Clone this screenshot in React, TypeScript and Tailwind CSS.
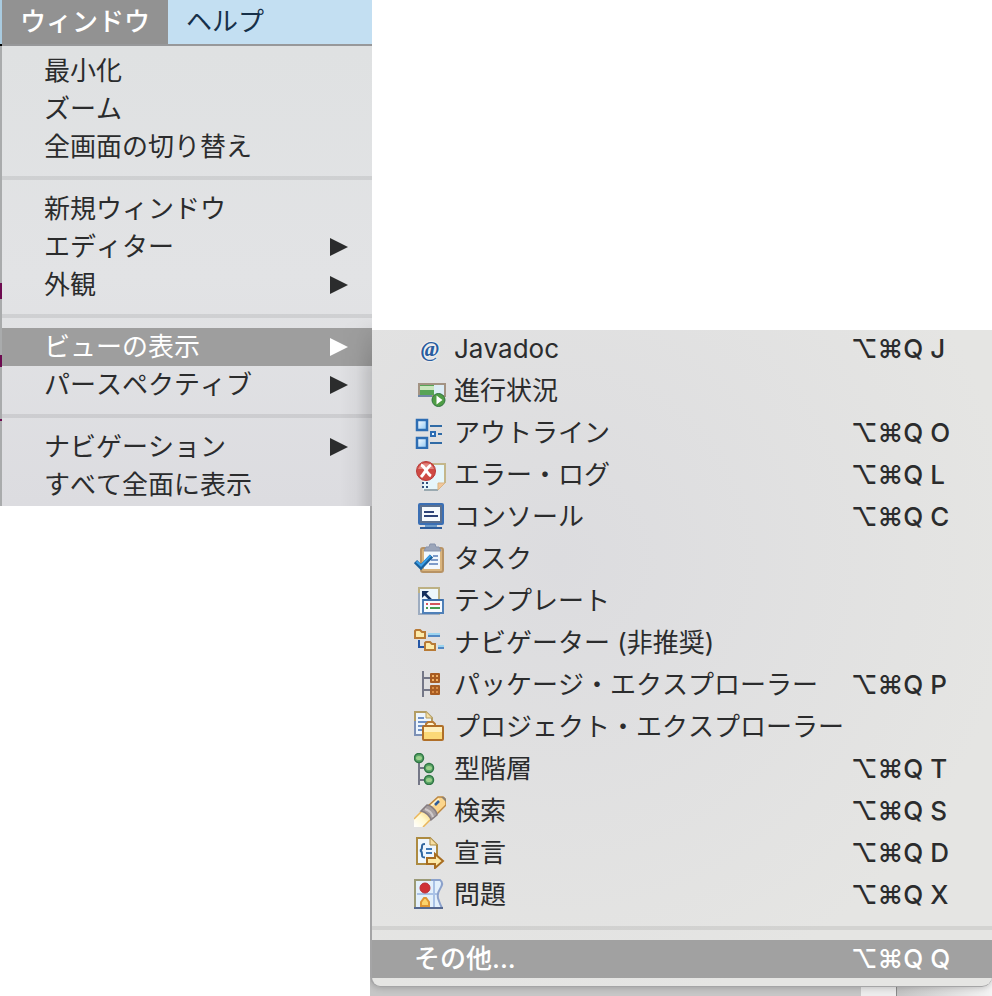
import type { ReactNode } from "react";

const FONT = "font-['Inter','Noto_Sans_CJK_JP',sans-serif]";

function Icon({ children }: { children: ReactNode }) {
  return (
    <svg width="32" height="32" viewBox="0 0 32 32" fill="none" aria-hidden="true">
      {children}
    </svg>
  );
}

const JavadocIcon = () => (
  <span
    aria-hidden="true"
    className="flex h-8 w-8 items-center justify-center font-['Liberation_Serif',serif] text-[22px] leading-none font-bold text-[#2a5d9e] italic [text-shadow:0_0_2px_white,0_0_2px_white]"
  >
    @
  </span>
);

const ProgressIcon = () => (
  <Icon>
    <rect x="5" y="9" width="26" height="12" fill="#dcecf5" stroke="#a39383" strokeWidth="2" />
    <path d="M4 21h14" stroke="#6f87a5" strokeWidth="2" />
    <rect x="6" y="10" width="14" height="10" fill="#57a457" />
    <rect x="6" y="11" width="14" height="4" fill="#c9e6bd" />
    <circle cx="24.5" cy="25" r="6.5" fill="#4f9d45" stroke="#2f7440" />
    <path d="M22.5 20.5l6 4.5-6 4.5z" fill="#fff" />
  </Icon>
);

const OutlineIcon = () => (
  <Icon>
    <defs>
      <linearGradient id="outline-box" x1="0" y1="0" x2="1" y2="1">
        <stop stopColor="#fff" />
        <stop offset="1" stopColor="#8cc6f3" />
      </linearGradient>
    </defs>
    <rect x="3" y="3" width="10" height="10" fill="url(#outline-box)" stroke="#2d6db3" strokeWidth="2.500" />
    <rect x="3" y="21" width="10" height="10" fill="url(#outline-box)" stroke="#2d6db3" strokeWidth="2.500" />
    <path d="M16 9h12M16 26h12M24 17h4" stroke="#2f6aa5" strokeWidth="2" />
    <rect x="17" y="15" width="4" height="4" fill="#e9f5ff" stroke="#2d6db3" strokeWidth="2" />
  </Icon>
);

const ErrorLogIcon = () => (
  <Icon>
    <path d="M9 5h22v19l-7 7H9z" fill="#e6f6fb" />
    <path d="M18 5h13v19" stroke="#c4b78b" strokeWidth="2" />
    <path d="M10 31h14" stroke="#9aa9b0" strokeWidth="2" />
    <path d="M24 31v-7h7z" fill="#f2c69a" stroke="#d9b583" />
    <path d="M8 24h2M8 28h2M12 24h2M12 28h2" stroke="#34517d" strokeWidth="2" />
    <circle cx="12" cy="12" r="9.5" fill="#cf4b45" stroke="#b83a38" />
    <path d="M4 10a8.500 8.500 0 0 1 16 0z" fill="#e28780" />
    <path d="M7 6c4 1 6 9 10 11M17 6c-4 2-6 8-10 12" stroke="#fff" strokeWidth="3" />
  </Icon>
);

const ConsoleIcon = () => (
  <Icon>
    <rect x="4" y="2" width="26" height="22" rx="2" fill="#3b6fb4" />
    <rect x="6" y="4" width="22" height="18" fill="#5a7090" />
    <rect x="8" y="6" width="18" height="14" fill="#f6fafd" />
    <path d="M10 11h10M10 15h14" stroke="#2e4377" strokeWidth="2" />
    <path d="M11 25h12" stroke="#6e9cc9" strokeWidth="2" />
    <path d="M6 27h22" stroke="#2c5c9c" strokeWidth="2" />
  </Icon>
);

const TasksIcon = () => (
  <Icon>
    <rect x="7" y="5" width="22" height="24" rx="2" fill="#d9b47d" stroke="#b89364" strokeWidth="2" />
    <rect x="10" y="8" width="16" height="18" fill="#f2f8fd" />
    <path d="M10 8l2-4h3l1-3h5l1 3h3l2 4z" fill="#9ba5b9" stroke="#8793ac" />
    <path d="M19 13h5M17 17h7M15 21h9" stroke="#7d9bc9" strokeWidth="2" />
    <path d="M1.500 18.500l5.500 5.500 10.500-11" stroke="#1a609c" strokeWidth="4.500" />
    <path d="M2.500 18.500l4.500 4 9.500-10" stroke="#3ba0e8" strokeWidth="2" />
  </Icon>
);

const TemplatesIcon = () => (
  <Icon>
    <rect x="5" y="3" width="20" height="26" fill="#eef7fb" stroke="#bdb184" strokeWidth="2" />
    <path d="M5 8v21h20" stroke="#9dacc0" strokeWidth="2" />
    <path d="M9 7l9 9" stroke="#15305c" strokeWidth="2.500" />
    <path d="M8 6h7l-7 7z" fill="#15305c" />
    <rect x="9" y="15" width="20" height="13" fill="#f7fbff" stroke="#4f80b8" strokeWidth="2" />
    <path d="M9 15h20" stroke="#3e70aa" strokeWidth="2" />
    <path d="M12 19h2M16 19h10" stroke="#d4555d" strokeWidth="2" />
    <path d="M12 23h2M16 23h10" stroke="#479a51" strokeWidth="2" />
  </Icon>
);

const NavigatorIcon = () => (
  <Icon>
    <path d="M5 13v7h5" stroke="#2456a5" strokeWidth="2" />
    <path d="M14 7h12M24 19h6" stroke="#9bd4f0" strokeWidth="2" />
    <path d="M14 9h12M24 21h6" stroke="#5288c3" strokeWidth="2" />
    <path d="M1 11V4l1-1h4l2 2h3v6z" fill="#fdebaa" stroke="#b87a35" strokeWidth="2" />
    <path d="M11 23v-7l1-1h4l2 2h3v6z" fill="#fdebaa" stroke="#b87a35" strokeWidth="2" />
  </Icon>
);

const PackageIcon = () => (
  <Icon>
    <path d="M9 2v26M9 9h7M9 21h7" stroke="#747787" strokeWidth="2" />
    <rect x="16" y="4" width="10" height="10" rx="1" fill="#a85c22" />
    <rect x="16" y="16" width="10" height="10" rx="1" fill="#a85c22" />
    <path d="M18 6h2v2h-2zM22 6h2v2h-2zM18 10h2v2h-2zM22 10h2v2h-2z" fill="#f3b265" />
    <path d="M18 18h2v2h-2zM22 18h2v2h-2zM18 22h2v2h-2zM22 22h2v2h-2z" fill="#d98c45" />
  </Icon>
);

const ProjectIcon = () => (
  <Icon>
    <path d="M1 1h11l6 6v17H1z" fill="#edf5fd" stroke="#b39d63" strokeWidth="2" />
    <path d="M1 10v14h10" stroke="#7c90b5" strokeWidth="2" />
    <path d="M12 1v6h6" fill="#f6dfa4" stroke="#b39d63" />
    <path d="M4 7h6M4 11h10M4 15h6M4 19h4" stroke="#6e90c5" strokeWidth="2" />
    <path d="M12 15v-2l2-2h5l2 2v2" fill="#fff3cd" stroke="#b87a35" strokeWidth="2" />
    <rect x="9" y="15" width="20" height="14" rx="1" fill="#fbd877" stroke="#b06f28" strokeWidth="2" />
    <path d="M10 16h18v5H10z" fill="#fff0bd" />
  </Icon>
);

const HierarchyIcon = () => (
  <Icon>
    <path d="M5 9v23M5 15h6M5 27h6" stroke="#747787" strokeWidth="2" />
    {[
      [5, 5],
      [15, 15],
      [15, 27],
    ].map(([cx, cy]) => (
      <g key={cy}>
        <circle cx={cx} cy={cy} r="4.500" fill="#5ba567" stroke="#2f7745" strokeWidth="1.500" />
        <ellipse cx={cx} cy={cy} rx="3" ry="2" fill="#9bd08c" />
      </g>
    ))}
  </Icon>
);

const SearchIcon = () => (
  <Icon>
    <defs>
      <linearGradient id="beam" x1="0" y1="1" x2="1" y2="0">
        <stop stopColor="#fff" />
        <stop offset="0.500" stopColor="#fff8cf" />
        <stop offset="1" stopColor="#f9cf63" />
      </linearGradient>
    </defs>
    <path d="M0 24l8-9 9 9-8 8H0z" fill="url(#beam)" />
    <path d="M0 24l8-8M9 32l7-7" stroke="#eab65a" strokeWidth="1.500" />
    <path d="M14 11L24 2h5l3 3v5l-10 10z" fill="#fbd58c" stroke="#bd8740" strokeWidth="1.500" />
    <path d="M17 11l8-7" stroke="#fff2cc" strokeWidth="2" />
    <path d="M27 2h3l2 2v3z" fill="#8f8373" />
    <path d="M7 16l6-6c4 0 10 6 10 10l-6 5c-1-4-5-8-10-9z" fill="#a79fa0" stroke="#857c80" strokeWidth="1.500" />
    <path d="M11 14c3 1 7 4 8 8" stroke="#cfc9ca" strokeWidth="2" />
    <path d="M21 10l4-4" stroke="#2e5c9a" strokeWidth="2.500" />
  </Icon>
);

const DeclarationIcon = () => (
  <Icon>
    <path d="M3 1h13l7 7v19H3z" fill="#eef6fd" stroke="#ad8b41" strokeWidth="2" />
    <path d="M16 1v7h7" fill="#f6dfa4" stroke="#ad8b41" />
    <path d="M11 7c-3 0-3 1-3 3s0 3-2 3.500c2 .5 2 2 2 4s0 3 3 3" stroke="#2f659f" strokeWidth="2" />
    <path d="M12 12h6M12 16h6" stroke="#4079b5" strokeWidth="2" />
    <path d="M13 21h8v-4l8 7-8 7v-4h-8z" fill="#fdeaa8" stroke="#a86d20" strokeWidth="2" />
  </Icon>
);

const ProblemsIcon = () => (
  <Icon>
    <path d="M1 1h25c3 2 3 6 0 9s-4 8-1 12c1 3 2 5 4 7H1z" fill="#e3f0fb" />
    <path d="M20 2v27M3 15h22" stroke="#a9c2e6" strokeWidth="2" />
    <path d="M1 29V1h16" stroke="#9b9a76" strokeWidth="2" />
    <path d="M17 1h9c3 2 2 6 0 9s-3 8-1 12c1 3 2 5 3 7" stroke="#8ba1cb" strokeWidth="2" />
    <path d="M0 29h29" stroke="#55688f" strokeWidth="2" />
    <circle cx="11" cy="9" r="5" fill="#cf3136" stroke="#b92b35" />
    <path d="M7 27v-4l3-4h2l3 4v4z" fill="#fbd36c" stroke="#de9634" strokeWidth="2" />
  </Icon>
);

const Arrow = () => (
  <svg width="18" height="20" viewBox="0 0 18 20" fill="currentColor" aria-hidden="true">
    <path d="M0 1l18 9-18 9z" />
  </svg>
);

type MenuRow = { label: string; submenu?: boolean; active?: boolean };

const windowMenu: MenuRow[][] = [
  [{ label: "最小化" }, { label: "ズーム" }, { label: "全画面の切り替え" }],
  [{ label: "新規ウィンドウ" }, { label: "エディター", submenu: true }, { label: "外観", submenu: true }],
  [
    { label: "ビューの表示", submenu: true, active: true },
    { label: "パースペクティブ", submenu: true },
  ],
  [{ label: "ナビゲーション", submenu: true }, { label: "すべて全面に表示" }],
];

const views: { label: string; keys?: string; icon: () => ReactNode }[] = [
  { label: "Javadoc", keys: "⌥⌘Q J", icon: JavadocIcon },
  { label: "進行状況", icon: ProgressIcon },
  { label: "アウトライン", keys: "⌥⌘Q O", icon: OutlineIcon },
  { label: "エラー・ログ", keys: "⌥⌘Q L", icon: ErrorLogIcon },
  { label: "コンソール", keys: "⌥⌘Q C", icon: ConsoleIcon },
  { label: "タスク", icon: TasksIcon },
  { label: "テンプレート", icon: TemplatesIcon },
  { label: "ナビゲーター (非推奨)", icon: NavigatorIcon },
  { label: "パッケージ・エクスプローラー", keys: "⌥⌘Q P", icon: PackageIcon },
  { label: "プロジェクト・エクスプローラー", icon: ProjectIcon },
  { label: "型階層", keys: "⌥⌘Q T", icon: HierarchyIcon },
  { label: "検索", keys: "⌥⌘Q S", icon: SearchIcon },
  { label: "宣言", keys: "⌥⌘Q D", icon: DeclarationIcon },
  { label: "問題", keys: "⌥⌘Q X", icon: ProblemsIcon },
];

const Separator = () => <div role="separator" className="my-[10px] h-1 bg-black/8" />;

function WindowMenu() {
  return (
    <div
      role="menu"
      aria-label="ウィンドウ"
      className="relative bg-linear-to-b from-[#dfe1e2] via-[#e2e3e5] to-[#dcdce0] pt-[6px] pb-[2px]"
    >
      {windowMenu.map((group, index) => (
        <div key={group[0].label} role="group">
          {index > 0 && <Separator />}
          {group.map((row) => (
            <button
              key={row.label}
              role="menuitem"
              className={`flex h-[38px] w-full items-center justify-between pr-6 pl-[42px] ${
                row.active ? "bg-[#9e9e9e] text-white" : ""
              }`}
            >
              <span>{row.label}</span>
              {row.submenu && <Arrow />}
            </button>
          ))}
        </div>
      ))}
      <div className="pointer-events-none absolute right-0 bottom-0 h-[190px] w-8 bg-linear-to-r from-transparent via-black/3 to-black/15 mask-t-from-70%" />
    </div>
  );
}

function ViewMenu() {
  return (
    <div className="bg-[linear-gradient(to_right,#c6c6c6_79%,#ececec_79%_84.5%,#8a8a8a_84.5%_84.8%,#c4c4c4_84.8%,#f4f4f4)] pb-[9px]">
      <div
        role="menu"
        aria-label="ビューの表示"
        className="rounded-b-[10px] border-b border-l-2 border-[#a5a5a6] bg-[radial-gradient(circle_at_30%_35%,#dcdcdf,#e5e5e3_75%)] pb-2 shadow-[0_1px_6px_rgba(0,0,0,0.2)] [clip-path:inset(0_0_-10px_0)]"
      >
        {views.map(({ label, keys, icon: ViewIcon }) => (
          <button
            key={label}
            role="menuitem"
            className="flex h-[42px] w-full items-center pl-[42px] text-left whitespace-nowrap first:h-10 first:pb-[2px]"
          >
            <ViewIcon />
            <span className="ml-2 flex-1">{label}</span>
            {keys && <kbd className={`w-[141px] font-medium ${FONT}`}>{keys}</kbd>}
          </button>
        ))}
        <Separator />
        <button
          role="menuitem"
          className="flex h-[38px] w-full items-center bg-[#a1a1a1] pl-[42px] text-left font-medium whitespace-nowrap text-white"
        >
          <span className="flex-1">その他...</span>
          <kbd className={`w-[141px] ${FONT}`}>⌥⌘Q Q</kbd>
        </button>
      </div>
    </div>
  );
}

export default function App() {
  return (
    <main
      className={`flex min-h-screen items-start bg-white text-[26px] leading-[38px] text-[#2b2c2d] [font-kerning:none] ${FONT}`}
    >
      <div className="z-10 flex w-[372px] shrink-0">
        <div className="flex w-[2px] shrink-0 flex-col">
          <div className="h-11 bg-[#a9cbe0]" />
          <div className="h-[2px] bg-black" />
          <div className="h-[237px] bg-[#a9abac]" />
          <div className="h-4 bg-[#6d0a50]" />
          <div className="h-14 bg-[#a9abac]" />
          <div className="h-3 bg-[#6d0a50]" />
          <div className="h-[52px] bg-[#a9abac]" />
          <div className="h-[2px] bg-[#6d0a50]" />
          <div className="flex-1 bg-[#a9abac]" />
        </div>
        <div className="flex-1">
          <nav className="flex h-[46px] border-b-2 border-[#97989a] bg-[#c3dff2]">
            <button className="w-[166px] bg-[#929292] font-medium text-white">ウィンドウ</button>
            <button className="px-[18px] text-[#16304a]">ヘルプ</button>
          </nav>
          <WindowMenu />
        </div>
      </div>
      <div className="mt-[330px] -ml-[2px] min-w-0 flex-1">
        <ViewMenu />
      </div>
    </main>
  );
}
